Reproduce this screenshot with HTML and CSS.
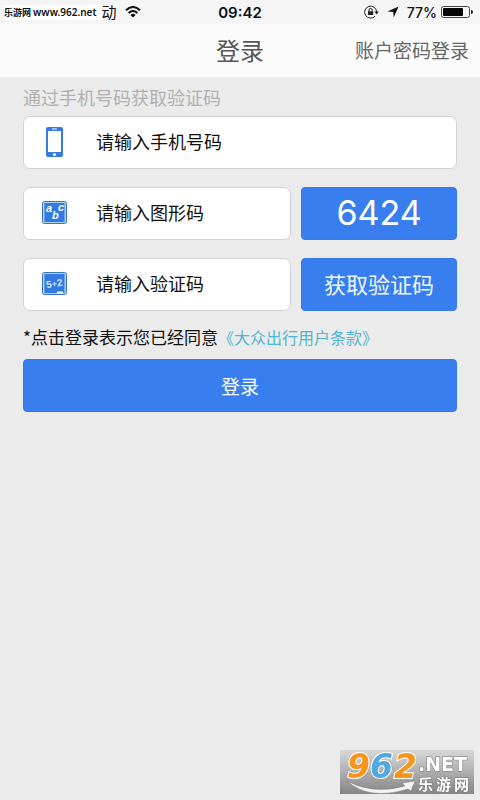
FILE: index.html
```html
<!DOCTYPE html>
<html lang="zh-CN">
<head>
<meta charset="utf-8">
<meta name="viewport" content="width=device-width, initial-scale=1">
<title>登录</title>
<link rel="stylesheet" href="styles.css">
</head>
<body>
<div class="status">
  <div class="status-left">
    <span class="site-tag">乐游网 <b>www.962.net</b></span>
    <span class="carrier">动</span>
    <svg class="wifi" width="16" height="12" viewBox="0 0 16 12" fill="none" stroke="#111" stroke-width="2">
      <path d="M1 4.2Q8-2.2 15 4.2M3.6 7Q8 3 12.4 7"/>
      <path d="M8 11.6 5.4 8.9Q8 6.8 10.6 8.9Z" fill="#111" stroke="none"/>
    </svg>
  </div>
  <span class="clock">09:42</span>
  <div class="status-right">
    <svg width="15" height="14" viewBox="0 0 15 14" fill="none" stroke="#222" stroke-width="1">
      <path d="M11 11.2A6 6 0 1 1 12.6 7"/>
      <path d="M10.4 6.6h4.4l-2.2 2.8z" fill="#222" stroke="none"/>
      <path d="M4 6.2h5.2V10H4z" fill="#222" stroke="none"/>
      <path d="M5 6.4V5a1.6 1.6 0 0 1 3.2 0v1.4"/>
    </svg>
    <svg class="arrow" width="12" height="12" viewBox="0 0 12 12"><path d="M11.6.4 6.7 11.6 6.2 6 .4 5.5z" fill="#111"/></svg>
    <span class="percent">77%</span>
    <svg width="32" height="12" viewBox="0 0 32 12">
      <rect x=".5" y=".5" width="28" height="11" rx="2" fill="none" stroke="#444"/>
      <rect x="2" y="2" width="20" height="8" rx="1" fill="#050505"/>
      <path d="M30 4q2 0 2 2t-2 2z" fill="#222"/>
    </svg>
  </div>
</div>
<header class="header">
  <h1 class="title">登录</h1>
  <a class="switch" href="#password">账户密码登录</a>
</header>
<main>
  <form class="form">
    <p class="hint">通过手机号码获取验证码</p>
    <label class="field">
      <svg class="icon" width="26" height="30" viewBox="0 0 26 30">
        <rect x="4" y="0" width="17" height="30" rx="2" fill="#347be2"/>
        <rect x="6" y="4" width="13" height="21" fill="#fff"/>
        <path d="M10 2h5" stroke="#fff"/>
        <circle cx="12.5" cy="27.5" r="1.6" fill="#fff"/>
      </svg>
      <input type="tel" aria-label="手机号码" placeholder="请输入手机号码">
    </label>
    <div class="row">
      <label class="field">
        <svg class="icon" width="26" height="24" viewBox="0 0 26 24">
          <rect x=".5" y=".5" width="24" height="22" rx="2" fill="#a9d2ed" stroke="#3a75bf"/>
          <rect x="2.5" y="2" width="20" height="19" fill="#3279e4"/>
          <g class="letters"><text x="4" y="11">a</text><text x="10" y="18">b</text><text x="16" y="10">c</text></g>
        </svg>
        <input type="text" aria-label="图形码" placeholder="请输入图形码">
      </label>
      <button class="btn captcha" type="button">6424</button>
    </div>
    <div class="row">
      <label class="field">
        <svg class="icon" width="26" height="24" viewBox="0 0 26 24">
          <rect x=".5" y=".5" width="24" height="22" rx="2" fill="#a9d2ed" stroke="#3a75bf"/>
          <rect x="2.5" y="2" width="20" height="19" fill="#3279e4"/>
          <g class="sum" transform="rotate(-10 12 12)"><text x="4" y="15">5</text><text x="15" y="15">2</text><path d="M10.5 12h4M12.5 10v4" stroke="#cfe5fb"/></g>
          <path d="M15 20.5h6" stroke="#fff" stroke-width="2"/>
        </svg>
        <input type="text" aria-label="验证码" placeholder="请输入验证码">
      </label>
      <button class="btn send" type="button">获取验证码</button>
    </div>
    <p class="terms">*点击登录表示您已经同意<a href="#terms">《大众出行用户条款》</a></p>
    <button class="btn submit" type="submit">登录</button>
  </form>
</main>
<div class="watermark">
  <svg width="134" height="44" viewBox="0 0 134 44">
    <defs><linearGradient id="bg" x2="0" y2="1"><stop stop-color="#d8d8d8"/><stop offset="1" stop-color="#858585"/></linearGradient></defs>
    <rect width="134" height="44" fill="url(#bg)"/>
    <path d="M7 31Q33 45 65 36l-3-3 13-2-4 10-3-2Q29 51 7 31z" fill="#f4f4f4" stroke="#777" stroke-width=".5"/>
    <g class="digits"><text x="7" y="28" fill="#f7941e">9</text><text x="30" y="28" fill="#4fa9e0">6</text><text x="54" y="28" fill="#f7941e">2</text></g>
    <text class="net" x="78" y="21">.NET</text>
    <g class="brand"><text x="78" y="40">乐</text><text x="96" y="40">游</text><text x="114" y="40">网</text></g>
  </svg>
</div>
</body>
</html>
```
FILE: styles.css
```css
* {
  box-sizing: border-box;
}

body {
  margin: 0;
  min-height: 100vh;
  background: #ebebeb;
  color: #111;
  font-family: "Noto Sans CJK SC", sans-serif;
}

h1, p {
  margin: 0;
}

a {
  text-decoration: none;
}

.status {
  display: grid;
  grid-template-columns: 1fr auto 1fr;
  align-items: center;
  height: 24px;
  padding: 0 7px 0 4px;
  background: #f5f5f5;
}

.status-left, .status-right {
  display: flex;
  align-items: center;
}

.status-right {
  justify-content: flex-end;
  gap: 4px;
}

.site-tag {
  padding-right: 5px;
  background: #fff;
  font-size: 9px;
  font-weight: 700;
  line-height: 14px;
  white-space: nowrap;
}

.site-tag b {
  font-family: "Noto Sans", sans-serif;
  font-size: 10px;
  font-weight: 600;
}

.carrier {
  font-size: 15px;
  line-height: 24px;
}

.wifi {
  margin-left: 8px;
}

.arrow {
  margin: 0 4px;
}

.clock, .percent {
  font-family: Inter, sans-serif;
  font-size: 15px;
  font-weight: 500;
}

.percent {
  font-size: 14px;
}

.clock {
  padding-left: 3px;
  font-weight: 600;
}

.header {
  display: grid;
  grid-template-columns: 1fr auto 1fr;
  align-items: center;
  height: 53px;
  padding: 0 11px 2px;
  background: #fbfbfb;
}

.title {
  grid-column: 2;
  color: #555;
  font-size: 24px;
  font-weight: 400;
}

.switch {
  justify-self: end;
  color: #666;
  font-size: 19px;
}

.form {
  display: flex;
  flex-direction: column;
  gap: 18px;
  padding: 7px 23px;
}

.hint {
  margin-bottom: -12px;
  color: #b0b0b0;
  font-size: 18px;
  line-height: 26px;
}

.row {
  display: grid;
  grid-template-columns: 268fr 156fr;
  gap: 10px;
}

.field {
  display: flex;
  align-items: center;
  gap: 28px;
  min-width: 0;
  height: 53px;
  padding: 0 18px 2px;
  border: 1px solid #d2d2d2;
  border-radius: 7px;
  background: #fff;
}

.icon {
  flex: none;
}

.field input {
  flex: 1;
  min-width: 0;
  padding: 0 0 2px;
  border: 0;
  outline: 0;
  background: transparent;
  font: 400 18px/26px "Noto Sans CJK SC", sans-serif;
}

.field input::placeholder {
  color: #111;
  opacity: 1;
}

.btn {
  height: 53px;
  padding: 0;
  border: 1px solid #347ae8;
  border-radius: 4px;
  background: #387eee;
  color: #fff;
  font-family: "Noto Sans CJK SC", sans-serif;
  font-size: 19px;
  line-height: 28px;
}

.captcha {
  padding-bottom: 2px;
  font-family: Inter, sans-serif;
  font-size: 34px;
}

.send {
  padding-bottom: 4px;
  color: #f0f6ff;
  font-size: 22px;
}

.terms {
  margin: -2px 0 -6px;
  font-size: 17px;
  line-height: 20px;
}

.terms a {
  color: #50b5d5;
  font-size: 16px;
}

.letters {
  fill: #fff;
  font: italic 700 11px "Liberation Sans", sans-serif;
}

.sum {
  fill: #cfe5fb;
  font: 700 10px "Liberation Sans", sans-serif;
}

.watermark {
  position: fixed;
  right: 6px;
  bottom: 6px;
  height: 44px;
}

.watermark svg {
  overflow: visible;
}

.digits {
  stroke: #fff;
  stroke-width: 2px;
  paint-order: stroke;
  font: italic 700 33px "DejaVu Sans", sans-serif;
}

.net, .brand {
  fill: #fff;
  stroke: #777;
  stroke-width: 1px;
  paint-order: stroke;
}

.net {
  font: 700 19px "DejaVu Sans", sans-serif;
}

.brand {
  font: 700 15px "Noto Sans CJK SC", sans-serif;
}
```
